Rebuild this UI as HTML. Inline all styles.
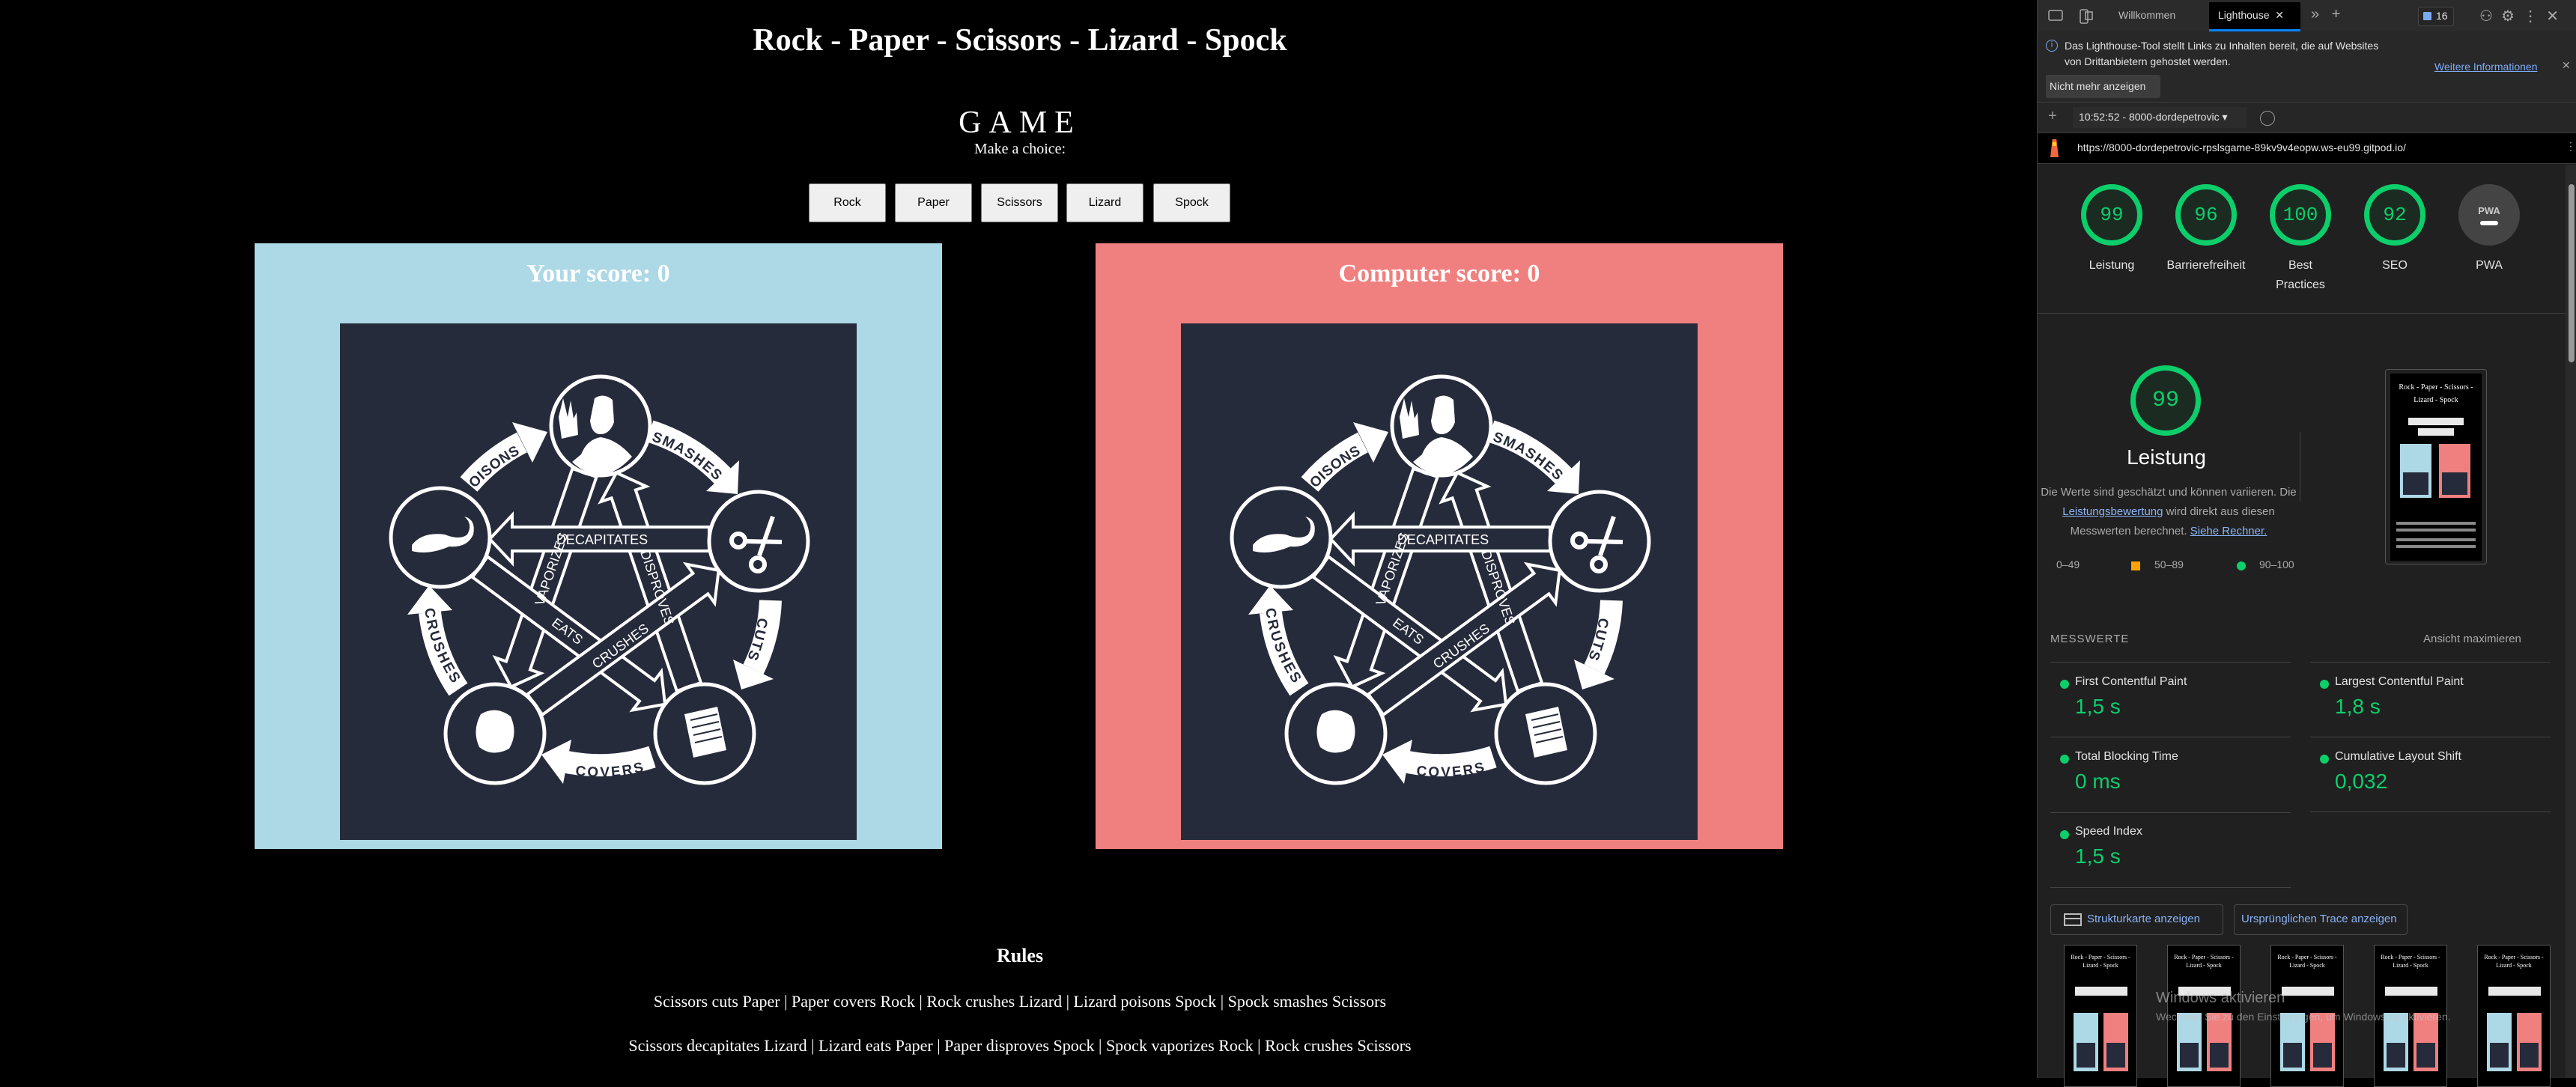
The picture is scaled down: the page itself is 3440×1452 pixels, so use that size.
<!DOCTYPE html>
<html><head><meta charset="utf-8">
<style>
*{box-sizing:border-box;margin:0;padding:0}
body{width:3440px;height:1440px;background:#000;overflow:hidden;position:relative;font-family:"Liberation Sans",sans-serif}
.a{position:absolute}
.fancy{font-family:"Liberation Serif",serif;color:#fff;white-space:nowrap}
.btn{position:absolute;top:245px;width:103px;height:52px;background:#efefef;border:1px solid #767676;border-radius:2px;font:16px "Liberation Sans",sans-serif;color:#000;display:flex;align-items:center;justify-content:center}
.panel{position:absolute;top:325px;width:918px;height:809px}
.dia{position:absolute;top:107px;left:114px;width:690px;height:690px;background:#262b3b}
.dt{color:#e3e3e3;font-size:14px;white-space:nowrap}
.gauge{position:absolute;width:82px;height:82px;border-radius:50%;border:7px solid #0cce6b;background:#1c2b22;color:#0cce6b;font:26px "Liberation Mono",monospace;display:flex;align-items:center;justify-content:center}
.gl{position:absolute;width:126px;text-align:center;color:#e3e3e3;font-size:16px;line-height:26px}
.mt{position:absolute;color:#e3e3e3;font-size:16px}
.mv{position:absolute;color:#0cce6b;font-size:28px}
.dot{position:absolute;width:12px;height:12px;border-radius:50%;background:#0cce6b}
.hl{position:absolute;height:1px;background:#444;width:321px}
.th{position:absolute;top:1262px;width:98px;height:190px;background:#000;border:1px solid #555;overflow:hidden}
.th .t{color:#fff;font:8px "Liberation Serif",serif;text-align:center;margin-top:10px;line-height:11px}
.th .b{position:absolute;top:55px;left:14px;width:70px;height:12px;background:#e8e8e8}
.th .p1{position:absolute;top:90px;left:12px;width:33px;height:78px;background:#add8e6}
.th .p2{position:absolute;top:90px;left:52px;width:33px;height:78px;background:#f08080}
.th .p1 i,.th .p2 i{position:absolute;left:4px;top:40px;width:25px;height:33px;background:#262b3b}
</style></head><body>

<div class="a fancy" style="left:0;width:2724px;top:30px;text-align:center;font-size:42px;font-weight:bold;">Rock - Paper - Scissors - Lizard - Spock</div>
<div class="a fancy" style="left:0;width:2724px;top:140px;text-align:center;font-size:42px;letter-spacing:10px;">GAME</div>
<div class="a fancy" style="left:0;width:2724px;top:188px;text-align:center;font-size:20px;">Make a choice:</div>

<div class="btn" style="left:1080px">Rock</div>
<div class="btn" style="left:1195px">Paper</div>
<div class="btn" style="left:1310px">Scissors</div>
<div class="btn" style="left:1424px">Lizard</div>
<div class="btn" style="left:1540px">Spock</div>

<div class="panel" style="left:340px;background:#add8e6">
 <div class="a fancy" style="left:0;width:918px;top:22px;text-align:center;font-size:34px;font-weight:bold">Your score: 0</div>
 <div class="dia">
 <svg width="690" height="690" viewBox="0 0 690 690">
  <g fill="none" stroke="#fff" stroke-width="30">
   <path d="M172 215 A228 228 0 0 1 243 159"/><path d="M414 144 A228 228 0 0 1 511 204"/><path d="M575 370 A228 228 0 0 1 552 462"/><path d="M417 579 A228 228 0 0 1 303 586"/><path d="M158 489 A228 228 0 0 1 120 386"/>
  </g>
  <g fill="#fff">
   <polygon points="257,186 230,132 277,145"/><polygon points="489,224 533,183 531,228"/><polygon points="525,449 579,475 536,489"/><polygon points="309,556 298,615 269,576"/><polygon points="150,383 90,389 119,350"/>
  </g>
  <defs>
   <path id="ap1" d="M166 226 A222 222 0 0 1 262 157"/><path id="ap2" d="M418 150 A222 222 0 0 1 512 210"/><path id="ap3" d="M567 374 A222 222 0 0 1 545 462"/><path id="ap4" d="M300 594 A234 234 0 0 0 420 587"/><path id="ap5" d="M120 380 A222 222 0 0 0 160 482"/>
  </defs>
  <g fill="#262b3b" font-family="Liberation Sans" font-weight="bold" font-size="19" letter-spacing="2">
   <text dy="7" letter-spacing="1"><textPath href="#ap1">POISONS</textPath></text>
   <text dy="7"><textPath href="#ap2">SMASHES</textPath></text>
   <text dy="7"><textPath href="#ap3" startOffset="20">CUTS</textPath></text>
   <text dy="7"><textPath href="#ap4" startOffset="15">COVERS</textPath></text>
   <text dy="7"><textPath href="#ap5">CRUSHES</textPath></text>
  </g>
  <g fill="#262b3b" stroke="#fff" stroke-width="4" stroke-linejoin="miter">
   <polygon points="342.6,205 254,462.5 268,467.4 228.5,485.5 207.7,446.6 222,451.5 310.4,194"/>
   <polygon points="482,480 394.8,222.5 409,217.7 369.1,199.5 348.4,238.1 362.6,233.3 449.8,491"/>
   <polygon points="176.9,339 399.9,504.5 390.9,516.5 434,508.7 429.1,465.1 420.1,477.1 197.1,311.6"/>
   <polygon points="270.3,522.8 491.4,361.3 500.3,373.5 505.7,329.9 462.5,321.7 471.4,333.9 250.3,495.4"/>
   <polygon points="493,272 230,272 230,256 200,288 230,320 230,304 493,304"/>
  </g>
  <g fill="#fff" font-family="Liberation Sans" font-size="18" text-anchor="middle">
   <text x="350" y="295">DECAPITATES</text>
   <text transform="translate(288,330) rotate(-71)">VAPORIZES</text>
   <text transform="translate(418,355) rotate(71)">DISPROVES</text>
   <text transform="translate(300,416) rotate(36.6)">EATS</text>
   <text transform="translate(378,436) rotate(-36)">CRUSHES</text>
  </g>
  <g fill="#262b3b" stroke="#fff" stroke-width="5">
   <circle cx="348" cy="137" r="66"/><circle cx="559" cy="291" r="66"/><circle cx="487" cy="548" r="66"/><circle cx="207" cy="548" r="66"/><circle cx="134" cy="286" r="66"/>
  </g>
  <g fill="#fff">
   <path d="M340 100 Q352 92 364 102 L366 132 Q360 148 348 148 Q336 148 334 130Z"/><path d="M322 175 Q330 155 348 152 Q370 155 390 178 Q370 200 348 203 Q325 200 310 185Z"/><path d="M292 125 l6 -25 6 25 4 -22 4 24 4 -8 2 30 -22 5Z"/>
   <path d="M188 522 Q208 510 228 525 Q238 548 226 568 Q204 580 186 566 Q176 544 188 522Z"/>
   <path d="M460 522 l44 -10 12 58 -44 10Z"/>
   <path d="M96 296 Q110 278 140 282 Q160 290 170 282 Q178 268 166 258 Q182 262 178 282 Q170 300 146 298 Q118 310 96 304Z"/>
  </g>
  <g stroke="#262b3b" stroke-width="2"><line x1="468" y1="530" x2="504" y2="522"/><line x1="470" y1="540" x2="506" y2="532"/><line x1="472" y1="550" x2="508" y2="542"/><line x1="474" y1="560" x2="510" y2="552"/></g>
  <g stroke="#fff" stroke-width="6" fill="none"><line x1="578" y1="258" x2="560" y2="310"/><circle cx="558" cy="322" r="9"/><circle cx="532" cy="290" r="9"/><line x1="541" y1="291" x2="590" y2="292"/></g>
 </svg>
 </div>
</div>

<div class="panel" style="left:1463px;background:#f08080">
 <div class="a fancy" style="left:0;width:918px;top:22px;text-align:center;font-size:34px;font-weight:bold">Computer score: 0</div>
 <div class="dia">
 <svg width="690" height="690" viewBox="0 0 690 690">
  <g fill="none" stroke="#fff" stroke-width="30">
   <path d="M172 215 A228 228 0 0 1 243 159"/><path d="M414 144 A228 228 0 0 1 511 204"/><path d="M575 370 A228 228 0 0 1 552 462"/><path d="M417 579 A228 228 0 0 1 303 586"/><path d="M158 489 A228 228 0 0 1 120 386"/>
  </g>
  <g fill="#fff">
   <polygon points="257,186 230,132 277,145"/><polygon points="489,224 533,183 531,228"/><polygon points="525,449 579,475 536,489"/><polygon points="309,556 298,615 269,576"/><polygon points="150,383 90,389 119,350"/>
  </g>
  <defs>
   <path id="bp1" d="M166 226 A222 222 0 0 1 262 157"/><path id="bp2" d="M418 150 A222 222 0 0 1 512 210"/><path id="bp3" d="M567 374 A222 222 0 0 1 545 462"/><path id="bp4" d="M300 594 A234 234 0 0 0 420 587"/><path id="bp5" d="M120 380 A222 222 0 0 0 160 482"/>
  </defs>
  <g fill="#262b3b" font-family="Liberation Sans" font-weight="bold" font-size="19" letter-spacing="2">
   <text dy="7" letter-spacing="1"><textPath href="#bp1">POISONS</textPath></text>
   <text dy="7"><textPath href="#bp2">SMASHES</textPath></text>
   <text dy="7"><textPath href="#bp3" startOffset="20">CUTS</textPath></text>
   <text dy="7"><textPath href="#bp4" startOffset="15">COVERS</textPath></text>
   <text dy="7"><textPath href="#bp5">CRUSHES</textPath></text>
  </g>
  <g fill="#262b3b" stroke="#fff" stroke-width="4" stroke-linejoin="miter">
   <polygon points="342.6,205 254,462.5 268,467.4 228.5,485.5 207.7,446.6 222,451.5 310.4,194"/>
   <polygon points="482,480 394.8,222.5 409,217.7 369.1,199.5 348.4,238.1 362.6,233.3 449.8,491"/>
   <polygon points="176.9,339 399.9,504.5 390.9,516.5 434,508.7 429.1,465.1 420.1,477.1 197.1,311.6"/>
   <polygon points="270.3,522.8 491.4,361.3 500.3,373.5 505.7,329.9 462.5,321.7 471.4,333.9 250.3,495.4"/>
   <polygon points="493,272 230,272 230,256 200,288 230,320 230,304 493,304"/>
  </g>
  <g fill="#fff" font-family="Liberation Sans" font-size="18" text-anchor="middle">
   <text x="350" y="295">DECAPITATES</text>
   <text transform="translate(288,330) rotate(-71)">VAPORIZES</text>
   <text transform="translate(418,355) rotate(71)">DISPROVES</text>
   <text transform="translate(300,416) rotate(36.6)">EATS</text>
   <text transform="translate(378,436) rotate(-36)">CRUSHES</text>
  </g>
  <g fill="#262b3b" stroke="#fff" stroke-width="5">
   <circle cx="348" cy="137" r="66"/><circle cx="559" cy="291" r="66"/><circle cx="487" cy="548" r="66"/><circle cx="207" cy="548" r="66"/><circle cx="134" cy="286" r="66"/>
  </g>
  <g fill="#fff">
   <path d="M340 100 Q352 92 364 102 L366 132 Q360 148 348 148 Q336 148 334 130Z"/><path d="M322 175 Q330 155 348 152 Q370 155 390 178 Q370 200 348 203 Q325 200 310 185Z"/><path d="M292 125 l6 -25 6 25 4 -22 4 24 4 -8 2 30 -22 5Z"/>
   <path d="M188 522 Q208 510 228 525 Q238 548 226 568 Q204 580 186 566 Q176 544 188 522Z"/>
   <path d="M460 522 l44 -10 12 58 -44 10Z"/>
   <path d="M96 296 Q110 278 140 282 Q160 290 170 282 Q178 268 166 258 Q182 262 178 282 Q170 300 146 298 Q118 310 96 304Z"/>
  </g>
  <g stroke="#262b3b" stroke-width="2"><line x1="468" y1="530" x2="504" y2="522"/><line x1="470" y1="540" x2="506" y2="532"/><line x1="472" y1="550" x2="508" y2="542"/><line x1="474" y1="560" x2="510" y2="552"/></g>
  <g stroke="#fff" stroke-width="6" fill="none"><line x1="578" y1="258" x2="560" y2="310"/><circle cx="558" cy="322" r="9"/><circle cx="532" cy="290" r="9"/><line x1="541" y1="291" x2="590" y2="292"/></g>
 </svg>
 </div>
</div>

<div class="a fancy" style="left:0;width:2724px;top:1262px;text-align:center;font-size:26px;font-weight:bold">Rules</div>
<div class="a fancy" style="left:0;width:2724px;top:1325px;text-align:center;font-size:22px">Scissors cuts Paper | Paper covers Rock | Rock crushes Lizard | Lizard poisons Spock | Spock smashes Scissors</div>
<div class="a fancy" style="left:0;width:2724px;top:1384px;text-align:center;font-size:22px">Scissors decapitates Lizard | Lizard eats Paper | Paper disproves Spock | Spock vaporizes Rock | Rock crushes Scissors</div>

<!-- DevTools -->
<div class="a" style="left:2720px;top:0;width:720px;height:1440px;background:#202020;border-left:1px solid #3c3c3c">
 <div class="a" style="left:0;top:0;width:720px;height:42px;background:#2b2b2b"></div>
 <svg class="a" style="left:14px;top:12px" width="60" height="22"><rect x="1" y="2" width="18" height="13" rx="2" fill="none" stroke="#aaa" stroke-width="1.5"/><rect x="43" y="1" width="10" height="18" rx="2" fill="none" stroke="#aaa" stroke-width="1.5"/><rect x="50" y="4" width="9" height="10" fill="none" stroke="#aaa" stroke-width="1.5"/></svg>
 <div class="a dt" style="left:108px;top:12px;color:#bbb">Willkommen</div>
 <div class="a" style="left:229px;top:3px;width:122px;height:39px;background:#000;border-bottom:3px solid #0a84ff"></div>
 <div class="a dt" style="left:241px;top:12px">Lighthouse&nbsp;&nbsp;✕</div>
 <div class="a dt" style="left:365px;top:8px;font-size:20px;color:#aaa">»&nbsp;&nbsp;&nbsp;+</div>
 <div class="a" style="left:508px;top:9px;width:48px;height:26px;border:1px solid #444;border-radius:3px;background:#252525"></div>
 <div class="a" style="left:515px;top:16px;width:11px;height:11px;background:#7ba9f0;border-radius:1px"></div>
 <div class="a dt" style="left:532px;top:13px">16</div>
 <div class="a dt" style="left:590px;top:9px;font-size:20px;color:#aaa">⚇&nbsp;&nbsp;⚙&nbsp;&nbsp;⋮&nbsp;&nbsp;✕</div>
 <div class="a" style="left:0;top:42px;width:720px;height:94px;background:#282828"></div>
 <div class="a" style="left:11px;top:53px;width:16px;height:16px;border:1.5px solid #7ba9f0;border-radius:50%;color:#7ba9f0;font-size:11px;text-align:center;line-height:13px">i</div>
 <div class="a dt" style="left:36px;top:51px;line-height:21px">Das Lighthouse-Tool stellt Links zu Inhalten bereit, die auf Websites<br>von Drittanbietern gehostet werden.</div>
 <div class="a dt" style="left:530px;top:81px;color:#7cacf8;text-decoration:underline">Weitere Informationen</div>
 <div class="a dt" style="left:700px;top:79px;color:#aaa">✕</div>
 <div class="a" style="left:11px;top:100px;width:153px;height:31px;background:#3d3d3d;border-radius:3px"></div>
 <div class="a dt" style="left:16px;top:107px">Nicht mehr anzeigen</div>
 <div class="a" style="left:0;top:136px;width:720px;height:41px;background:#262626;border-top:1px solid #3c3c3c"></div>
 <div class="a dt" style="left:14px;top:144px;font-size:20px;color:#999">+</div>
 <div class="a" style="left:47px;top:143px;width:232px;height:28px;background:#2c2c2c"></div>
 <div class="a dt" style="left:55px;top:148px">10:52:52 - 8000-dordepetrovic ▾</div>
 <div class="a" style="left:297px;top:148px;width:20px;height:20px;border:1.5px solid #999;border-radius:50%"></div>
 <div class="a" style="left:0;top:177px;width:720px;height:42px;background:#000;border-top:1px solid #3c3c3c;border-bottom:1px solid #3c3c3c"></div>
 <div class="a" style="left:17px;top:186px;width:11px;height:24px;background:#f4663c;clip-path:polygon(25% 0,75% 0,100% 100%,0 100%)"></div>
 <div class="a" style="left:20px;top:190px;width:5px;height:5px;background:#ffdd00"></div>
 <div class="a dt" style="left:53px;top:189px">https://8000-dordepetrovic-rpslsgame-89kv9v4eopw.ws-eu99.gitpod.io/</div>
 <div class="a dt" style="left:705px;top:187px;color:#aaa">⋮</div>
 <div class="a" style="left:705px;top:220px;width:15px;height:1220px;background:#2a2a2a"></div>
 <div class="a" style="left:709px;top:246px;width:8px;height:238px;background:#9a9a9a;border-radius:4px"></div>

 <div class="gauge" style="left:58px;top:246px">99</div>
 <div class="gauge" style="left:184px;top:246px">96</div>
 <div class="gauge" style="left:310px;top:246px">100</div>
 <div class="gauge" style="left:436px;top:246px">92</div>
 <div class="gauge" style="left:562px;top:246px;border-color:#444;background:#444;color:#fff;font:bold 13px 'Liberation Sans';flex-direction:column"><span style="color:#ccc">PWA</span><span style="width:24px;height:6px;background:#fff;border-radius:3px;margin-top:6px"></span></div>
 <div class="gl" style="left:36px;top:342px">Leistung</div>
 <div class="gl" style="left:162px;top:342px">Barrierefreiheit</div>
 <div class="gl" style="left:288px;top:342px">Best<br>Practices</div>
 <div class="gl" style="left:414px;top:342px">SEO</div>
 <div class="gl" style="left:540px;top:342px">PWA</div>
 <div class="a" style="left:0;top:418px;width:705px;height:1px;background:#3c3c3c"></div>

 <div class="gauge" style="left:124px;top:488px;width:94px;height:94px;font-size:30px">99</div>
 <div class="a" style="left:0;top:595px;width:344px;text-align:center;color:#fff;font-size:28px">Leistung</div>
 <div class="a" style="left:0;top:645px;width:350px;text-align:center;color:#aaa;font-size:15px;line-height:26px;white-space:nowrap;overflow:hidden">Die Werte sind geschätzt und können variieren. Die<br><span style="color:#8ab4f8;text-decoration:underline">Leistungsbewertung</span> wird direkt aus diesen<br>Messwerten berechnet. <span style="color:#8ab4f8;text-decoration:underline">Siehe Rechner.</span></div>
 <div class="a" style="left:350px;top:577px;width:1px;height:93px;background:#444"></div>
 <div class="a dt" style="left:25px;top:746px;color:#aaa">0–49</div>
 <div class="a" style="left:125px;top:750px;width:12px;height:12px;background:#ffa400"></div>
 <div class="a dt" style="left:156px;top:746px;color:#aaa">50–89</div>
 <div class="dot" style="left:266px;top:750px"></div>
 <div class="a dt" style="left:296px;top:746px;color:#aaa">90–100</div>
 <div class="a" style="left:464px;top:493px;width:136px;height:261px;border:1px solid #555;border-radius:4px;background:#202020"></div>
 <div class="th" style="left:471px;top:499px;width:122px;height:250px;border:none">
  <div class="t" style="font-size:10px;line-height:17px">Rock - Paper - Scissors -<br>Lizard - Spock</div>
  <div class="b" style="top:59px;left:24px;width:74px;height:10px"></div>
  <div class="b" style="top:73px;left:37px;width:48px;height:10px"></div>
  <div class="p1" style="top:94px;left:13px;width:42px;height:72px"><i style="top:38px;left:4px;width:34px;height:30px"></i></div>
  <div class="p2" style="top:94px;left:65px;width:42px;height:72px"><i style="top:38px;left:4px;width:34px;height:30px"></i></div>
  <div class="a" style="left:8px;top:198px;width:106px;height:4px;background:#888"></div>
  <div class="a" style="left:8px;top:207px;width:106px;height:4px;background:#888"></div>
  <div class="a" style="left:8px;top:220px;width:106px;height:4px;background:#888"></div>
  <div class="a" style="left:8px;top:229px;width:106px;height:4px;background:#888"></div>
 </div>

 <div class="a" style="left:17px;top:845px;color:#aaa;font-size:15px;letter-spacing:1px">MESSWERTE</div>
 <div class="a" style="left:515px;top:845px;color:#aaa;font-size:15px">Ansicht maximieren</div>
 <div class="hl" style="left:17px;top:884px"></div><div class="hl" style="left:364px;top:884px"></div>
 <div class="dot" style="left:30px;top:908px"></div><div class="mt" style="left:50px;top:902px">First Contentful Paint</div><div class="mv" style="left:50px;top:928px">1,5 s</div>
 <div class="dot" style="left:377px;top:908px"></div><div class="mt" style="left:397px;top:902px">Largest Contentful Paint</div><div class="mv" style="left:397px;top:928px">1,8 s</div>
 <div class="hl" style="left:17px;top:984px"></div><div class="hl" style="left:364px;top:984px"></div>
 <div class="dot" style="left:30px;top:1008px"></div><div class="mt" style="left:50px;top:1002px">Total Blocking Time</div><div class="mv" style="left:50px;top:1028px">0 ms</div>
 <div class="dot" style="left:377px;top:1008px"></div><div class="mt" style="left:397px;top:1002px">Cumulative Layout Shift</div><div class="mv" style="left:397px;top:1028px">0,032</div>
 <div class="hl" style="left:17px;top:1085px"></div><div class="hl" style="left:364px;top:1084px"></div>
 <div class="dot" style="left:30px;top:1109px"></div><div class="mt" style="left:50px;top:1102px">Speed Index</div><div class="mv" style="left:50px;top:1128px">1,5 s</div>
 <div class="hl" style="left:17px;top:1185px"></div>
 <div class="a" style="left:17px;top:1208px;width:231px;height:41px;border:1px solid #4a4a4a;border-radius:4px"></div>
 <div class="a" style="left:35px;top:1220px;width:24px;height:17px;border:2px solid #bbb"></div>
 <div class="a" style="left:35px;top:1226px;width:24px;height:2px;background:#bbb"></div>
 <div class="a" style="left:66px;top:1219px;color:#8ab4f8;font-size:15px">Strukturkarte anzeigen</div>
 <div class="a" style="left:262px;top:1208px;width:232px;height:41px;border:1px solid #4a4a4a;border-radius:4px"></div>
 <div class="a" style="left:272px;top:1219px;color:#8ab4f8;font-size:15px">Ursprünglichen Trace anzeigen</div>

 <div class="th" style="left:35px"><div class="t">Rock - Paper - Scissors -<br>Lizard - Spock</div><div class="b"></div><div class="p1"><i></i></div><div class="p2"><i></i></div></div>
 <div class="th" style="left:173px"><div class="t">Rock - Paper - Scissors -<br>Lizard - Spock</div><div class="b"></div><div class="p1"><i></i></div><div class="p2"><i></i></div></div>
 <div class="th" style="left:311px"><div class="t">Rock - Paper - Scissors -<br>Lizard - Spock</div><div class="b"></div><div class="p1"><i></i></div><div class="p2"><i></i></div></div>
 <div class="th" style="left:449px"><div class="t">Rock - Paper - Scissors -<br>Lizard - Spock</div><div class="b"></div><div class="p1"><i></i></div><div class="p2"><i></i></div></div>
 <div class="th" style="left:587px"><div class="t">Rock - Paper - Scissors -<br>Lizard - Spock</div><div class="b"></div><div class="p1"><i></i></div><div class="p2"><i></i></div></div>
 <div class="a" style="left:158px;top:1322px;color:rgba(200,200,200,.6);font-size:20px;white-space:nowrap">Windows aktivieren</div>
 <div class="a" style="left:158px;top:1350px;color:rgba(200,200,200,.6);font-size:14px;white-space:nowrap">Wechseln Sie zu den Einstellungen, um Windows zu aktivieren.</div>
</div>
</body></html>
